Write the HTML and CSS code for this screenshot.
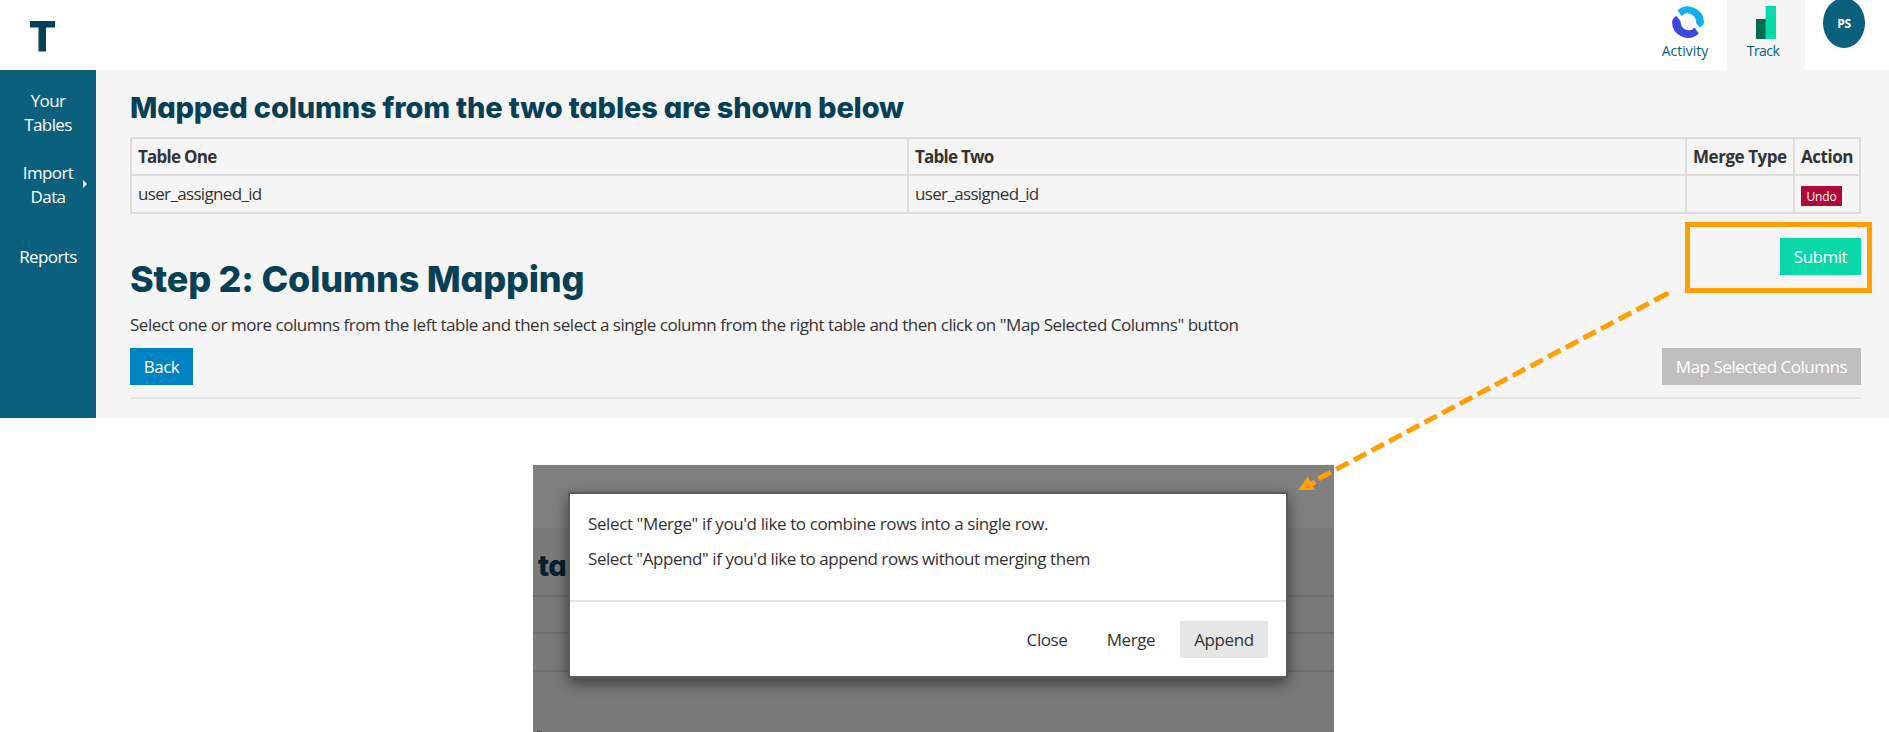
FILE: index.html
```html
<!DOCTYPE html>
<html lang="en">
<head>
<meta charset="utf-8">
<title>Columns Mapping</title>
<link rel="stylesheet" href="styles.css">
</head>
<body>
<div class="page">
  <header class="topbar">
    <div class="logo"><svg width="25" height="32" viewBox="0 0 25 32"><path d="M0 1H25V7.5H16V31.5H8.5V7.5H0Z" fill="#064057"/></svg></div>
    <nav class="apps">
      <a class="app activity">
        <svg width="34" height="34" viewBox="0 0 34 34"><path d="M6.5 5.5A16 16 0 0 1 33 17Q33 20 28.8 22.5L25 18A8.5 8.5 0 0 0 12.5 9.5L10.5 11Z" fill="#12b0e8"/><path d="M5.5 11L9.5 16A8.5 8.5 0 0 0 21.5 24.5L23.5 22.5L27.8 28.5A16 16 0 0 1 1 17Q1.4 13 5.5 11Z" fill="#3d48e0"/></svg>
        <span>Activity</span>
      </a>
      <a class="app track">
        <svg width="20" height="34" viewBox="0 0 20 34"><path d="M0 13H9V33H0Z" fill="#046b55"/><path d="M9 0H10V13H9Z" fill="#8debd0"/><path d="M9 13H10V33H9Z" fill="#059a76"/><path d="M10 0H20V33H10Z" fill="#04dba8"/></svg>
        <span>Track</span>
      </a>
      <div class="avatar-cell"><div class="avatar">PS</div></div>
    </nav>
  </header>
  <div class="body">
    <aside class="sidebar">
      <a class="side-item">Your<br>Tables</a>
      <a class="side-item import">Import<br>Data<svg class="caret" width="4" height="8" viewBox="0 0 4 8"><path d="M0 0L4 4L0 8Z" fill="#fff"/></svg></a>
      <a class="side-item">Reports</a>
    </aside>
    <main class="content">
      <h2 class="mapped-title">Mapped columns from the two tables are shown below</h2>
      <table class="mapped">
        <colgroup><col class="c1"><col class="c2"><col class="c3"><col class="c4"></colgroup>
        <tr><th>Table One</th><th>Table Two</th><th class="wide">Merge Type</th><th class="wide">Action</th></tr>
        <tr><td>user_assigned_id</td><td>user_assigned_id</td><td></td><td class="action"><button class="undo">Undo</button></td></tr>
      </table>
      <div class="submit-row">
        <h1 class="step-title">Step 2: Columns Mapping</h1>
        <div class="callout"><button class="btn submit">Submit</button></div>
      </div>
      <p class="desc">Select one or more columns from the left table and then select a single column from the right table and then click on "Map Selected Columns" button</p>
      <div class="btn-row"><button class="btn back">Back</button><button class="btn map">Map Selected Columns</button></div>
      <hr class="rule">
    </main>
  </div>
  <section class="capture">
    <div class="cap-top"></div>
    <div class="cap-title">ta</div>
    <div class="cap-line l1"></div>
    <div class="cap-line l2"></div>
    <div class="cap-line l3"></div>
    <div class="cap-edge"></div>
    <div class="dialog">
      <div class="dialog-body">
        <p>Select "Merge" if you'd like to combine rows into a single row.</p>
        <p class="second">Select "Append" if you'd like to append rows without merging them</p>
      </div>
      <div class="dialog-foot"><button class="btn flat close">Close</button><button class="btn flat merge">Merge</button><button class="btn flat append">Append</button></div>
    </div>
  </section>
  <svg class="arrow" width="380" height="210" viewBox="0 0 380 210"><path d="M374.500 5L26 190" fill="none" stroke="#ff9f00" stroke-width="5" stroke-dasharray="14 6"/><circle cx="374.500" cy="5" r="2.500" fill="#ff9f00"/><path d="M6 201L16 187.500L18.500 192.500L22 191L24.500 195L20.800 197L22.800 201Z" fill="#ff9f00"/></svg>
</div>
</body>
</html>
```
FILE: styles.css
```css
* { box-sizing: border-box; }
body { margin: 0; background: #fff; color: #333; font: 17px/24px "Open Sans", "Noto Sans", sans-serif; letter-spacing: -.47px; }
button { border: 0; margin: 0; padding: 0; font: inherit; letter-spacing: inherit; }
h1, h2, p { margin: 0; }
svg { display: block; }
.page { position: relative; width: 1889px; height: 732px; overflow: hidden; }

.topbar { display: flex; justify-content: space-between; height: 70px; }
.logo { padding: 20px 0 0 30px; }
.apps { display: flex; }
.app { display: flex; flex-direction: column; align-items: center; color: #0b607e; font-size: 14px; line-height: 20px; letter-spacing: 0; }
.activity { width: 92px; padding-top: 5px; padding-left: 9px; margin-right: -2px; }
.track { width: 78px; padding-top: 6px; background: #f5f5f5; }
.activity span { margin-top: 2px; margin-left: -5px; }
.track span { margin-top: 1px; margin-left: -6px; letter-spacing: -.6px; }
.avatar-cell { width: 84px; padding-left: 18px; }
.avatar { width: 42px; height: 50px; margin-top: -2px; border-radius: 50%; background: #0b607e; color: #fff; font-size: 12px; font-weight: 700; line-height: 51px; text-align: center; letter-spacing: -.2px; }

.body { display: flex; height: 348px; background: #f5f5f5; }
.sidebar { width: 96px; background: #0b607e; color: #fff; text-align: center; padding-top: 19px; letter-spacing: -.6px; }
.side-item { display: block; margin-bottom: 24px; }
.side-item.import { position: relative; margin-bottom: 36px; }
.caret { position: absolute; left: 83px; top: 19px; }
.content { width: 1765px; padding: 0 0 0 34px; }
.mapped-title, .step-title, .cap-title { font-family: Inter, sans-serif; font-weight: 800; font-feature-settings: "cv11"; color: #064057; white-space: nowrap; }
.mapped-title { height: 67px; padding-top: 20px; font-size: 29px; line-height: 36px; letter-spacing: -.18px; }
.mapped { width: 1731px; table-layout: fixed; border-collapse: collapse; }
.c1 { width: 777px; } .c2 { width: 778px; } .c3 { width: 108px; } .c4 { width: 66px; }
.mapped th, .mapped td { border: 2px solid #dcdcdc; padding: 0 0 0 6px; text-align: left; white-space: nowrap; letter-spacing: -.66px; }
.mapped th { letter-spacing: -.76px; }
.mapped th.wide { letter-spacing: -.45px; }
.mapped tr { height: 37px; }
.mapped tr + tr { height: 38px; }
.mapped .action { vertical-align: top; letter-spacing: -.2px; }
.undo { display: block; width: 41px; height: 20px; margin-top: 10px; background: #b20838; color: #fff; font-size: 12px; line-height: 21px; }
.submit-row { display: flex; justify-content: space-between; height: 79px; margin-top: 8px; margin-right: -11px; }
.step-title { padding-top: 34px; font-size: 36px; line-height: 46px; letter-spacing: -.2px; }
.callout { width: 187px; height: 71px; border: 5px solid #ff9f00; padding: 11px 6px 0 90px; }
.btn { display: block; height: 37px; line-height: 37px; color: #fff; white-space: nowrap; }
.submit { width: 81px; background: #0ad8a8; }
.desc { padding-top: 12px; height: 47px; white-space: nowrap; }
.btn-row { display: flex; justify-content: space-between; }
.back { width: 63px; background: #0082c3; }
.map { width: 199px; background: #bfbfbf; }
.rule { height: 2px; margin: 12px 0 0; border: 0; background: #e6e6e6; }

.capture { position: relative; width: 801px; height: 267px; margin: 47px 0 0 533px; overflow: hidden; background: #7a7a7a; }
.cap-top { height: 63px; background: #808080; }
.cap-title { height: 67px; padding: 20px 0 0 5px; font-size: 29px; line-height: 36px; color: #03202c; }
.cap-line { height: 2px; margin-bottom: 35px; background: #6e6e6e; }
.cap-line.l2 { margin-bottom: 36px; }
.cap-line.l3 { margin-bottom: 59px; }
.cap-edge { width: 5px; height: 1px; margin-left: 4px; background: #3a4a51; }
.dialog { position: absolute; left: 35px; top: 27px; width: 720px; height: 186px; border: 2px solid #5a5a5a; background: #fff; background-clip: padding-box; box-shadow: 0 5px 15px rgba(0,0,0,.5); letter-spacing: -.41px; }
.dialog-body { height: 108px; padding: 18px 0 0 18px; border-bottom: 2px solid #e5e5e5; white-space: nowrap; letter-spacing: -.39px; }
.dialog-body p { margin-bottom: 11px; }
.dialog-body .second { letter-spacing: -.43px; }
.dialog-foot { display: flex; justify-content: flex-end; gap: 10px; padding: 19px 18px 0 0; }
.flat { color: #333; background: transparent; }
.close { width: 70px; } .merge { width: 78px; } .append { width: 88px; background: #e6e6e6; }
.arrow { position: absolute; left: 1292px; top: 289px; }
```
